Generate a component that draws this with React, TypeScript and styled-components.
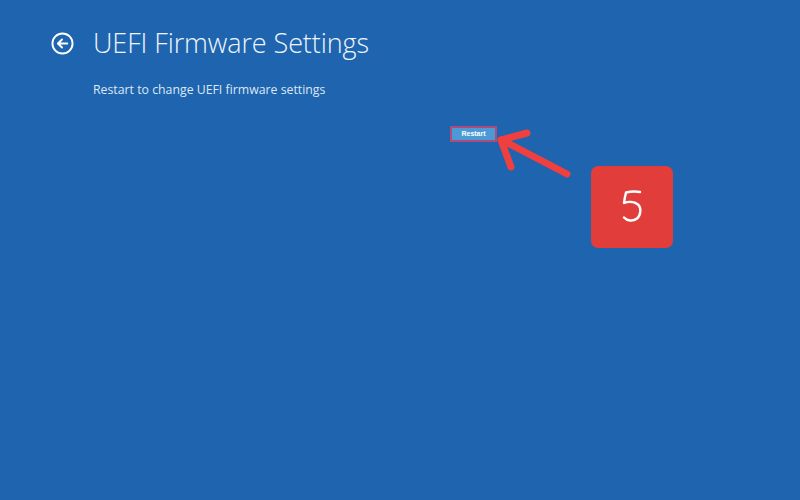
import React from "react";
import styled, { createGlobalStyle } from "styled-components";

const Global = createGlobalStyle`
  html, body { margin: 0; padding: 0; }
  body { background: #1f64ae; font-family: "Open Sans", "Noto Sans", sans-serif; }
`;

const Page = styled.div`
  position: relative;
  width: 800px;
  height: 500px;
  background: #1f64ae;
  color: #ffffff;
  overflow: hidden;
`;

const Content = styled.div`
  display: flex;
  flex-direction: column;
  padding: 25px 0 0 51px;
`;

const Header = styled.div`
  display: flex;
  align-items: center;
  gap: 19px;
`;

const BackIcon = styled.svg`
  width: 23px;
  height: 23px;
  flex: none;
`;

const Title = styled.h1`
  margin: 0;
  font-family: "Open Sans", sans-serif;
  font-weight: 300;
  font-size: 27px;
  line-height: 36px;
  letter-spacing: -0.1px;
  color: #eef4fb;
`;

const Subtitle = styled.p`
  margin: 20px 0 0 42px;
  font-family: "Open Sans", sans-serif;
  font-size: 12.3px;
  line-height: 18px;
  color: #dce8f5;
`;

const ButtonRow = styled.div`
  display: flex;
  padding: 27px 0 0 399px;
`;

const RestartButton = styled.button`
  width: 47px;
  height: 16px;
  padding: 0;
  background: #4b9ad6;
  border: 2px solid #b04a7a;
  color: #ffffff;
  font-family: "Liberation Sans", sans-serif;
  font-weight: 700;
  font-size: 7px;
  line-height: 12px;
`;

const Arrow = styled.svg`
  position: absolute;
  left: 490px;
  top: 125px;
  width: 90px;
  height: 60px;
`;

const Badge = styled.div`
  position: absolute;
  left: 591px;
  top: 166px;
  width: 82px;
  height: 82px;
  border-radius: 7px;
  background: #e03d3b;
  display: flex;
  align-items: center;
  justify-content: center;
`;

const Five = styled.svg`
  width: 30px;
  height: 40px;
`;

export default function App() {
  return (
    <Page>
      <Global />
      <Content>
        <Header>
          <BackIcon viewBox="0 0 24 24" fill="none" stroke="#ffffff" strokeWidth={2}>
            <circle cx="12" cy="12" r="10.5" />
            <path d="M17 12H7.5M11.5 7.8L7.2 12l4.3 4.2" strokeLinecap="round" strokeLinejoin="round" />
          </BackIcon>
          <Title>UEFI Firmware Settings</Title>
        </Header>
        <Subtitle>Restart to change UEFI firmware settings</Subtitle>
        <ButtonRow>
          <RestartButton>Restart</RestartButton>
        </ButtonRow>
      </Content>
      <Arrow viewBox="0 0 90 60" fill="none" stroke="#ef3f3f" strokeWidth={7} strokeLinecap="round" strokeLinejoin="round">
        <path d="M77 49L12 15" />
        <path d="M37 8L11 15L21 42" />
      </Arrow>
      <Badge>
        <Five viewBox="0 0 30 40" fill="none" stroke="#ffffff" strokeWidth={2.4} strokeLinecap="round" strokeLinejoin="round">
          <path d="M23 5C18 4 13 4.5 9 5.5C8 9.5 7.5 12 7 16C11 14.5 17 14.5 21 17.5C24.5 20.5 24 28 20 31.5C16 34.5 10 34 7 30.5" />
        </Five>
      </Badge>
    </Page>
  );
}
